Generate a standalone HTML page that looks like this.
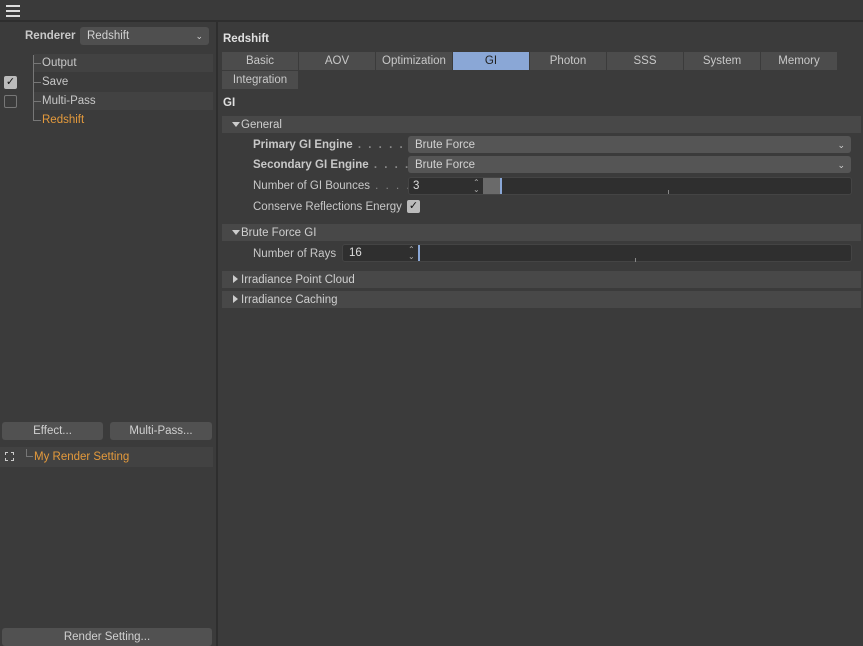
<!DOCTYPE html>
<html><head><style>
*{box-sizing:border-box;margin:0;padding:0}
body{width:863px;height:646px;background:#3b3b3b;font-family:"Liberation Sans",sans-serif;font-size:11.5px;color:#c8c8c8;position:relative;overflow:hidden}
.a{position:absolute}
.btn{background:#515151;border-radius:3px;text-align:center;line-height:18px;color:#d0d0d0}
.tab{position:absolute;top:52px;height:18px;width:76px;background:#4c4c4c;text-align:center;line-height:19px;color:#c8c8c8}
.hdr{position:absolute;left:222px;width:639px;height:17px;background:#484848;line-height:18px;padding-left:19px;color:#cfcfcf}
.tri{position:absolute;left:10px;top:6px;width:0;height:0}
.dd{position:absolute;background:#555;border-radius:3px;height:17px;line-height:18px;padding-left:7px;color:#d2d2d2}
.lbl{position:absolute;left:253px;line-height:18px}
.dots{color:#8a8a8a;letter-spacing:2px}
.sl{position:absolute;background:#2f2f2f;border:1px solid #444;border-radius:3px;height:18px}
.cb{position:absolute;width:13px;height:13px;border-radius:2px}
</style></head><body>
<div class="a" style="left:0;top:0;width:863px;height:22px;background:#3a3a3a;border-bottom:2px solid #2e2e2e"></div>
<div class="a" style="left:6px;top:5px;width:14px;height:2px;background:#ddd;box-shadow:0 5px 0 #ddd,0 10px 0 #ddd"></div>
<div class="a" style="left:216px;top:22px;width:2px;height:624px;background:#2e2e2e"></div>
<div class="a" style="left:25px;top:30px;font-weight:bold;color:#c8c8c8">Renderer</div>
<div class="dd" style="left:80px;top:27px;width:129px;height:18px;background:#4f4f4f;line-height:19px">Redshift<span style="position:absolute;right:6px;font-size:9px">&#8964;</span></div>
<div class="a" style="left:34px;top:54px;width:179px;height:18px;background:#424242"></div>
<div class="a" style="left:34px;top:92px;width:179px;height:18px;background:#424242"></div>
<div class="a" style="left:33px;top:55px;width:1px;height:65px;background:#777"></div>
<div class="a" style="left:33px;top:63px;width:8px;height:1px;background:#777"></div>
<div class="a" style="left:33px;top:82px;width:8px;height:1px;background:#777"></div>
<div class="a" style="left:33px;top:101px;width:8px;height:1px;background:#777"></div>
<div class="a" style="left:33px;top:120px;width:8px;height:1px;background:#777"></div>
<div class="a" style="left:42px;top:57px">Output</div>
<div class="a" style="left:42px;top:76px">Save</div>
<div class="a" style="left:42px;top:95px">Multi-Pass</div>
<div class="a" style="left:42px;top:114px;color:#e49a3c">Redshift</div>
<div class="cb" style="left:4px;top:76px;background:#bbb;color:#111;font-size:11px;line-height:13px;text-align:center">&#10003;</div>
<div class="cb" style="left:4px;top:95px;border:1px solid #777"></div>
<div class="a btn" style="left:2px;top:422px;width:101px">Effect...</div>
<div class="a btn" style="left:110px;top:422px;width:102px">Multi-Pass...</div>
<div class="a" style="left:0;top:447px;width:213px;height:20px;background:#424242"></div>
<div class="a" style="left:5px;top:452px;width:9px;height:9px;border:1px dashed #ccc"></div>
<div class="a" style="left:26px;top:449px;width:7px;height:8px;border-left:1px solid #777;border-bottom:1px solid #777"></div>
<div class="a" style="left:34px;top:451px;color:#e49a3c">My Render Setting</div>
<div class="a btn" style="left:2px;top:628px;width:210px">Render Setting...</div>

<div class="a" style="left:223px;top:33px;font-weight:bold;color:#e0e0e0">Redshift</div>
<div class="tab" style="left:222px">Basic</div>
<div class="tab" style="left:299px">AOV</div>
<div class="tab" style="left:376px">Optimization</div>
<div class="tab" style="left:453px;background:#8aa7d6;color:#222">GI</div>
<div class="tab" style="left:530px">Photon</div>
<div class="tab" style="left:607px">SSS</div>
<div class="tab" style="left:684px">System</div>
<div class="tab" style="left:761px">Memory</div>
<div class="tab" style="left:222px;top:71px">Integration</div>
<div class="a" style="left:223px;top:97px;font-weight:bold;color:#e0e0e0">GI</div>

<div class="hdr" style="top:116px"><div class="tri" style="border-left:4px solid transparent;border-right:4px solid transparent;border-top:5px solid #ccc"></div>General</div>
<div class="lbl" style="top:136px;font-weight:bold">Primary GI Engine<span class="dots"> . . . . . .</span></div>
<div class="dd" style="left:408px;top:136px;width:443px">Brute Force<span style="position:absolute;right:6px;font-size:9px">&#8964;</span></div>
<div class="lbl" style="top:156px;font-weight:bold">Secondary GI Engine<span class="dots"> . . . .</span></div>
<div class="dd" style="left:408px;top:156px;width:443px">Brute Force<span style="position:absolute;right:6px;font-size:9px">&#8964;</span></div>
<div class="lbl" style="top:177px">Number of GI Bounces<span class="dots"> . . . .</span></div>
<div class="sl" style="left:408px;top:177px;width:444px"></div>
<div class="a" style="left:413px;top:180px;color:#ddd">3</div>
<div class="a" style="left:473px;top:179px;font-size:8px;line-height:7px;color:#aaa">&#8963;<br>&#8964;</div>
<div class="a" style="left:483px;top:178px;width:17px;height:16px;background:#6a6a6a"></div>
<div class="a" style="left:500px;top:178px;width:2px;height:16px;background:#8aa7d6"></div>
<div class="a" style="left:668px;top:190px;width:1px;height:4px;background:#888"></div>
<div class="lbl" style="top:198px">Conserve Reflections Energy</div>
<div class="cb" style="left:407px;top:200px;background:#bbb;color:#111;font-size:11px;line-height:13px;text-align:center">&#10003;</div>

<div class="hdr" style="top:224px"><div class="tri" style="border-left:4px solid transparent;border-right:4px solid transparent;border-top:5px solid #ccc"></div>Brute Force GI</div>
<div class="lbl" style="top:245px">Number of Rays</div>
<div class="sl" style="left:342px;top:244px;width:510px"></div>
<div class="a" style="left:349px;top:247px;color:#ddd">16</div>
<div class="a" style="left:408px;top:246px;font-size:8px;line-height:7px;color:#aaa">&#8963;<br>&#8964;</div>
<div class="a" style="left:418px;top:245px;width:2px;height:16px;background:#8aa7d6"></div>
<div class="a" style="left:635px;top:258px;width:1px;height:4px;background:#888"></div>

<div class="hdr" style="top:271px"><div class="tri" style="top:4px;left:11px;border-top:4px solid transparent;border-bottom:4px solid transparent;border-left:5px solid #ccc"></div>Irradiance Point Cloud</div>
<div class="hdr" style="top:291px"><div class="tri" style="top:4px;left:11px;border-top:4px solid transparent;border-bottom:4px solid transparent;border-left:5px solid #ccc"></div>Irradiance Caching</div>
</body></html>
